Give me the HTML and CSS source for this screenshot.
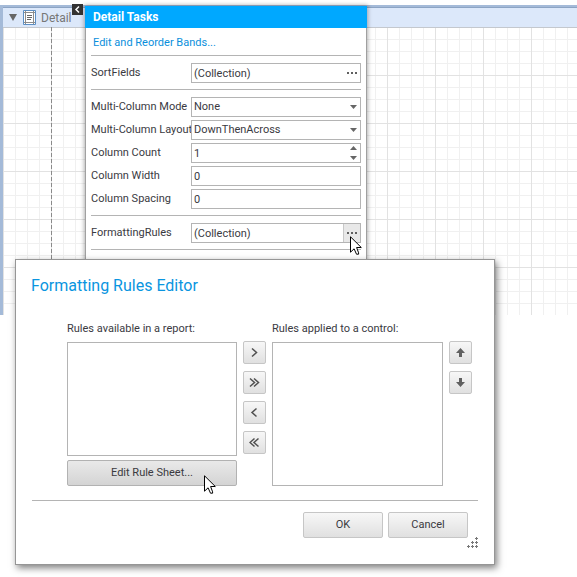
FILE: index.html
```html
<!DOCTYPE html>
<html lang="en">
<head>
<meta charset="utf-8">
<title>Report Designer</title>
<link rel="stylesheet" href="styles.css">
</head>
<body>
<svg class="defs" aria-hidden="true">
  <symbol id="pointer" viewBox="0 0 12 19">
    <path d="M.5 .8V16.2L4.1 12.8L6.5 18.2H8.6V16.8L6.6 11.5H11.3Z" fill="#fff" stroke="#000"/>
  </symbol>
  <symbol id="dots" viewBox="0 0 10 2"><path d="M0 0h2v2H0zM4 0h2v2H4zM8 0h2v2H8z" fill="#606060"/></symbol>
</svg>

<main class="designer">
  <div class="surface">
    <header class="band">
      <svg class="expand" viewBox="0 0 8 7"><path d="M0 0H8L4 7Z" fill="#666"/></svg>
      <svg class="band-icon" viewBox="0 0 13 15">
        <path d="M.5 .5H12.5V14.5H.5Z" fill="#fff" stroke="#5c8fc4"/>
        <path d="M2.500 1V14M10.500 1V14M1 2.500H12M1 12.500H12" stroke="#8c8c8c" fill="none"/>
        <path d="M4 5.500H9M4 7.500H9M4 9.500H8" stroke="#666" fill="none"/>
      </svg>
      <span>Detail</span>
    </header>
    <div class="grid"></div>
  </div>
</main>

<button class="smart-tag" aria-label="Close tasks"><svg viewBox="0 0 11 11"><path d="M7 2.500L4 5.500L7 8.500" fill="none" stroke="#fff" stroke-width="1.500"/></svg></button>

<section class="tasks">
  <h2>Detail Tasks</h2>
  <div class="tasks-body">
    <a class="bands-link" href="#">Edit and Reorder Bands...</a>
    <div class="group">
      <label for="sort">SortFields</label>
      <div class="field"><input id="sort" value="(Collection)" readonly><button class="more" aria-label="Edit sort fields"><svg><use href="#dots"/></svg></button></div>
    </div>
    <div class="group">
      <label for="mode">Multi-Column Mode</label>
      <div class="field"><select id="mode"><option>None</option></select><svg class="drop" viewBox="0 0 7 4"><path d="M0 0H7L3.500 4Z"/></svg></div>
      <label for="layout">Multi-Column Layout</label>
      <div class="field"><select id="layout"><option>DownThenAcross</option></select><svg class="drop" viewBox="0 0 7 4"><path d="M0 0H7L3.500 4Z"/></svg></div>
      <label for="count">Column Count</label>
      <div class="field"><input id="count" value="1"><svg class="spin" viewBox="0 0 7 14"><path d="M0 4L3.500 0L7 4ZM0 10H7L3.500 14Z"/></svg></div>
      <label for="width">Column Width</label>
      <div class="field"><input id="width" value="0"></div>
      <label for="spacing">Column Spacing</label>
      <div class="field"><input id="spacing" value="0"></div>
    </div>
    <div class="group">
      <label for="rules">FormattingRules</label>
      <div class="field"><input id="rules" value="(Collection)" readonly><button class="more hot" aria-label="Edit formatting rules"><svg><use href="#dots"/></svg></button>
        <svg class="cursor on-field"><use href="#pointer"/></svg></div>
    </div>
    <div class="group"></div>
  </div>
</section>

<section class="dialog" role="dialog" aria-labelledby="title">
  <h1 id="title">Formatting Rules Editor</h1>
  <div class="lists">
    <label for="available">Rules available in a report:</label>
    <label class="applied-label" for="applied">Rules applied to a control:</label>
    <div class="available">
      <select id="available" size="4"></select>
      <button class="btn pressed">Edit Rule Sheet...<svg class="cursor on-button"><use href="#pointer"/></svg></button>
    </div>
    <div class="stack moves">
      <button class="btn square" aria-label="Add"><svg viewBox="0 0 11 11"><path d="M3 1.500L7.500 5.500L3 9.500"/></svg></button>
      <button class="btn square" aria-label="Add all"><svg viewBox="0 0 11 11"><path d="M1 1.500L5.500 5.500L1 9.500M5 1.500L9.500 5.500L5 9.500"/></svg></button>
      <button class="btn square" aria-label="Remove"><svg viewBox="0 0 11 11"><path d="M7.500 1.500L3 5.500L7.500 9.500"/></svg></button>
      <button class="btn square" aria-label="Remove all"><svg viewBox="0 0 11 11"><path d="M5.500 1.500L1 5.500L5.500 9.500M9.500 1.500L5 5.500L9.500 9.500"/></svg></button>
    </div>
    <select id="applied" class="applied" size="4"></select>
    <div class="stack order">
      <button class="btn square" aria-label="Move up"><svg class="solid" viewBox="0 0 11 11"><path d="M5.500 1L10 6H7V10H4V6H1Z"/></svg></button>
      <button class="btn square" aria-label="Move down"><svg class="solid" viewBox="0 0 11 11"><path d="M5.500 10L10 5H7V1H4V5H1Z"/></svg></button>
    </div>
  </div>
  <footer>
    <button class="btn">OK</button>
    <button class="btn">Cancel</button>
  </footer>
  <svg class="grip" viewBox="0 0 11 11"><path d="M8 1.500h3M9.500 0v3M4 5.500h3M5.500 4v3M8 5.500h3M9.500 4v3M0 9.500h3M1.500 8v3M4 9.500h3M5.500 8v3M8 9.500h3M9.500 8v3" stroke="#777" fill="none"/></svg>
</section>
</body>
</html>
```

FILE: styles.css
```css
* { box-sizing: border-box; }

body {
  margin: 0;
  background: #fff;
  color: #3a3a3f;
  font: 11px/14px Roboto, sans-serif;
}

button, input, select { font: inherit; color: inherit; margin: 0; }
svg { display: block; }
.defs { position: absolute; width: 0; height: 0; }

.designer { padding-top: 5px; }

.surface {
  border-top: 2px solid #a4bad8;
  border-left: 3px solid #a4bad8;
}

.band {
  display: flex;
  align-items: center;
  height: 20px;
  padding-left: 6px;
  background: #dce8fa;
  border-top: 1px solid #8ca4c4;
  color: #777;
  font-size: 12px;
}

.expand { width: 8px; height: 7px; margin-right: 6px; }
.band-icon { width: 13px; height: 15px; margin-right: 5px; }

.grid {
  height: 288px;
  background:
    repeating-linear-gradient(to bottom, #8a8a8a 0 4px, transparent 4px 6px) 48px 0 / 1px 100% no-repeat,
    linear-gradient(#c4c8ce, #c4c8ce) 0 0 / 100% 1px no-repeat,
    linear-gradient(#e2e2e2 1px, transparent 1px) 0 0 / 48px 48px,
    linear-gradient(to right, #e2e2e2 1px, transparent 1px) 0 0 / 48px 48px,
    linear-gradient(#f0f0f0 1px, transparent 1px) 0 0 / 12px 12px,
    linear-gradient(to right, #f0f0f0 1px, transparent 1px) 0 0 / 12px 12px;
}

.smart-tag {
  position: absolute;
  left: 72px;
  top: 4px;
  width: 11px;
  height: 11px;
  padding: 0;
  border: 0;
  background: #333;
}

.tasks {
  position: absolute;
  left: 85px;
  top: 6px;
  width: 282px;
  background: #fff;
  box-shadow: 0 0 4px 1px rgba(0, 0, 0, .3);
}

.tasks h2 {
  margin: 0;
  padding: 0 8px;
  background: #00a8ff;
  color: #fff;
  font-size: 12px;
  line-height: 22px;
}

.tasks-body {
  padding: 8px 5px 12px;
  border: solid #a0a0a0;
  border-width: 0 1px;
}

.bands-link {
  display: block;
  padding: 0 2px 5px;
  color: #0a8fdc;
  text-decoration: none;
}

.group {
  display: grid;
  grid-template-columns: 100px minmax(0, 1fr);
  row-gap: 3px;
  align-items: center;
  padding: 7px 0 6px;
  border-top: 1px solid #b4b4b4;
}

.group label { white-space: nowrap; }

.field {
  position: relative;
  display: flex;
  align-items: center;
  height: 20px;
  border: 1px solid #b4b4b4;
  background: #fff;
}

.field input, .field select {
  flex: 1;
  min-width: 0;
  height: 18px;
  padding: 0 2px;
  border: 0;
  background: none;
  appearance: none;
  outline: 0;
}

.field svg { flex: none; }

.more {
  display: grid;
  flex: none;
  place-items: center;
  width: 17px;
  height: 18px;
  padding: 0;
  border: 0;
  border-left: 1px solid transparent;
  background: none;
}

.more svg { width: 10px; height: 2px; }
.more.hot { border-color: #c8c8c8; background: #e8e8e8; }
.drop { width: 7px; height: 4px; margin-right: 3px; fill: #666; }
.spin { width: 7px; height: 14px; margin-right: 3px; fill: #666; }

.cursor { position: absolute; width: 12px; height: 19px; }
.on-field { right: -2px; top: 12px; }
.on-button { right: 20px; top: 14px; }

.dialog {
  position: absolute;
  left: 15px;
  top: 259px;
  width: 480px;
  padding: 15px 16px 0 15px;
  border: 1px solid #969696;
  background: #fff;
  box-shadow: 2px 3px 7px rgba(0, 0, 0, .5);
}

.dialog h1 {
  margin: 0;
  color: #0a95e0;
  font-size: 16px;
  font-weight: normal;
  line-height: 22px;
}

.lists {
  display: grid;
  grid-template-columns: 170px 23px 171px 23px;
  grid-template-rows: 14px auto;
  column-gap: 6px;
  row-gap: 5px;
  padding: 25px 0 14px 36px;
}

.lists label { white-space: nowrap; }
.applied-label { grid-column: 3; }
.available { grid-area: 2 / 1; }
.moves { grid-area: 2 / 2; }
.applied { grid-area: 2 / 3; }
.order { grid-area: 2 / 4; }

.lists select {
  width: 100%;
  height: 144px;
  margin-top: 1px;
  border: 1px solid #b4b4b4;
  border-radius: 0;
  background: #fff;
  outline: 0;
}

.available { display: flex; flex-direction: column; gap: 4px; }
.lists .available select { height: 114px; }

.stack { display: flex; flex-direction: column; gap: 7px; }

.btn {
  height: 26px;
  padding: 0;
  border: 1px solid #c6c6c6;
  border-radius: 2px;
  background: linear-gradient(#f7f7f7, #e0e0e0);
}

.square {
  display: grid;
  place-items: center;
  height: 23px;
}

.square svg { width: 11px; height: 11px; fill: none; stroke: #505050; stroke-width: 1.500; }
.square .solid { fill: #606060; stroke: none; }

.pressed {
  position: relative;
  border-color: #b2b2b2;
  background: linear-gradient(#e9e9e9, #d4d4d4);
}

footer {
  display: flex;
  justify-content: flex-end;
  gap: 5px;
  margin-left: 1px;
  padding: 11px 10px 26px 0;
  border-top: 1px solid #b4b4b4;
}

footer .btn { width: 80px; }

.grip { position: absolute; right: 16px; bottom: 16px; width: 11px; height: 11px; }
```
